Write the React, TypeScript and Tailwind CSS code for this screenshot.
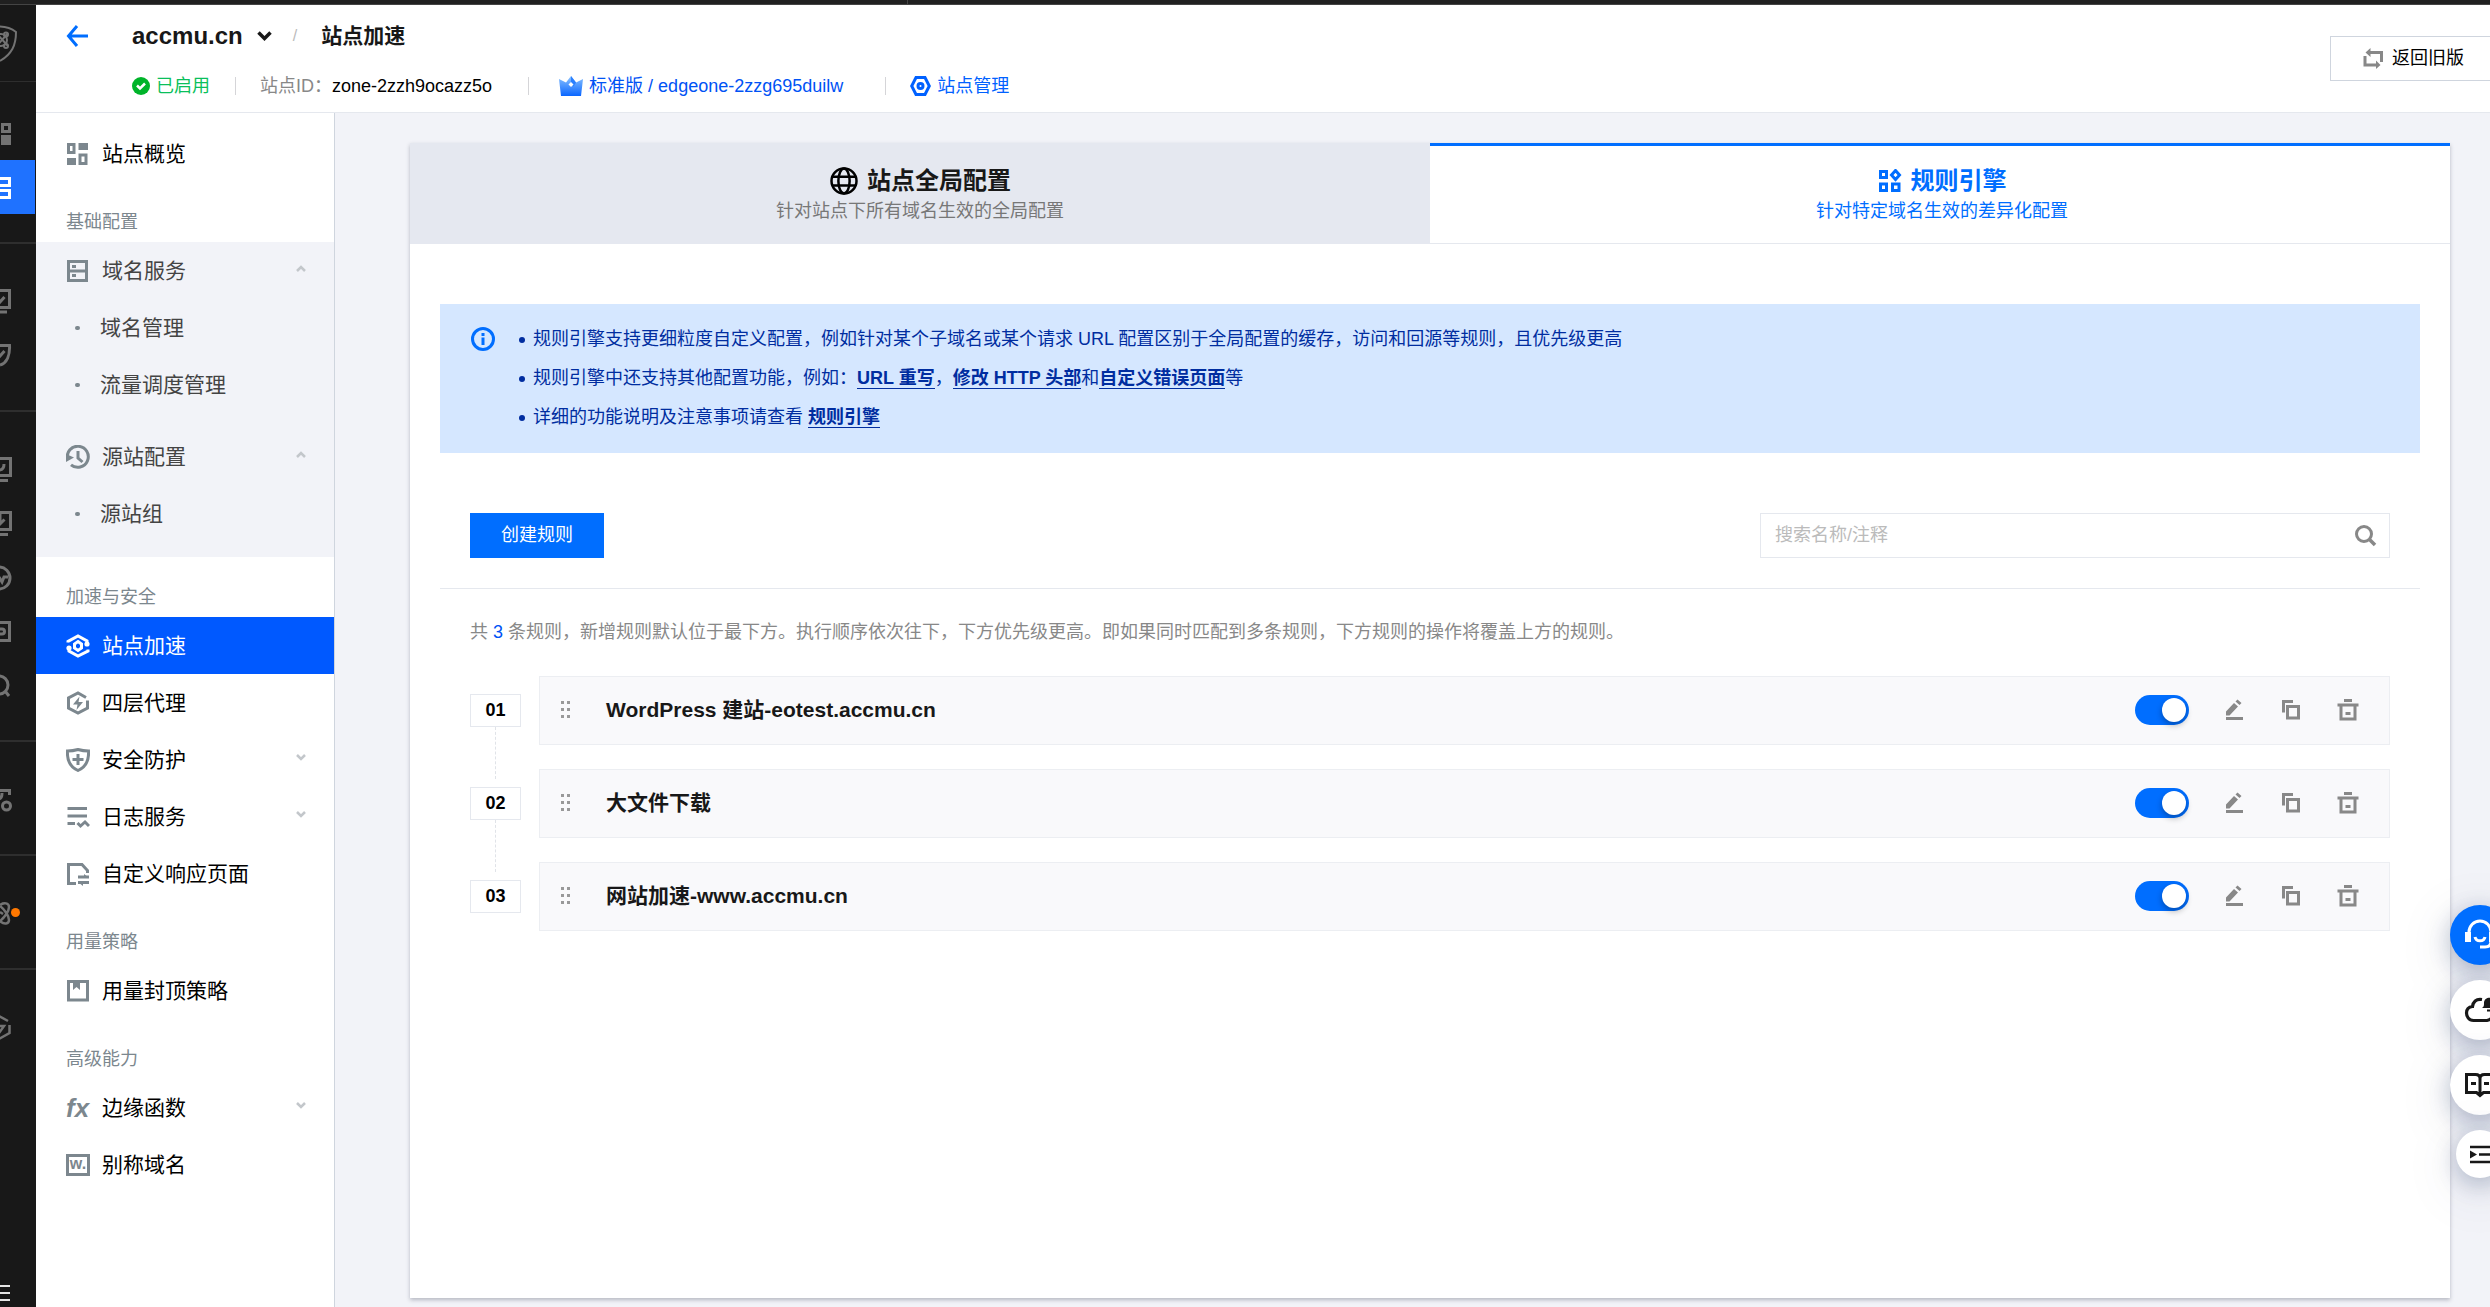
import type { ReactNode } from 'react';

type IconProps = { className?: string; children: ReactNode; size?: number; sw?: number };

function Icon({ className = '', children, size = 24, sw = 3 }: IconProps) {
  return (
    <svg
      aria-hidden="true"
      width={size}
      height={size}
      viewBox="0 0 24 24"
      fill="none"
      stroke="currentColor"
      strokeWidth={sw}
      className={'shrink-0 ' + className}
    >
      {children}
    </svg>
  );
}

const icons: Record<string, ReactNode> = {
  overview: (
    <Icon className="text-[#7c878e]">
      <path d="M2.500 2.500h5.500v8h-5.500zM14 13h6v8.500h-6z" />
      <path d="M1 16h9v7H1zM12.500 1H22v7h-9.500z" fill="currentColor" stroke="none" />
    </Icon>
  ),
  domain: (
    <Icon className="text-[#7c878e]">
      <path d="M2.500 2.500h18v19h-18zM1 12h21" />
      <path d="M6 6h4v3H6zM6 15h4v3H6z" fill="currentColor" stroke="none" />
    </Icon>
  ),
  origin: (
    <Icon className="text-[#7c878e]">
      <path d="M1.500 14A10.500 10.500 0 1 1 5 19.800" />
      <path d="M12 6v7l4.500 4" />
      <path d="M0 9v8l8-4.500z" fill="currentColor" stroke="none" />
    </Icon>
  ),
  accel: (
    <Icon className="text-white">
      <path d="M2 8.500V7.500L12 2l9 5v3M22 15.500V17L12 22l-9-5v-3" />
      <circle cx="21" cy="10" r="2.600" fill="currentColor" stroke="none" />
      <circle cx="3" cy="14" r="2.600" fill="currentColor" stroke="none" />
      <path d="M12 7.500l3.500 2.500v4L12 16.500 8.500 14v-4z" />
    </Icon>
  ),
  proxy: (
    <Icon className="text-[#7c878e]">
      <path d="M20 6.500L12 2 2.500 7v10l9.500 5 9.500-5V9.500" />
      <path d="M13.500 5.500L7 13.500h4.500L10.500 19 17 11h-4.500z" fill="currentColor" stroke="none" />
    </Icon>
  ),
  shield: (
    <Icon className="text-[#7c878e]">
      <path d="M12 1.500c3.500 1 7 1.500 10.500 1.500C23 11 21 18.500 12 22.500 3 18.500 1 11 1.500 3 5 3 8.500 2.500 12 1.500z" />
      <path d="M12 6v11M6.500 11.500h11" />
    </Icon>
  ),
  log: (
    <Icon className="text-[#7c878e]">
      <path d="M1.500 3.500H21M1.500 11H21M1.500 18.500H9" />
      <path d="M11.500 18l3 3 4.500-4 4 4" />
    </Icon>
  ),
  page: (
    <Icon className="text-[#7c878e]">
      <path d="M10 21.500H2.500v-19H16l5.500 6V11" />
      <path d="M12 15h11M12 20.500h11" />
      <path d="M18 12l5 4h-5zM17 24l-5-4h5z" fill="currentColor" stroke="none" />
    </Icon>
  ),
  cap: (
    <Icon className="text-[#7c878e]">
      <path d="M2.500 2.500h19v18.500h-19z" />
      <path d="M7 2h7v9l-3.500-3L7 11z" fill="currentColor" stroke="none" />
    </Icon>
  ),
  fx: <span aria-hidden="true" className="w-6 shrink-0 text-[26px] font-bold italic leading-6 text-[#7c878e]">fx</span>,
  alias: (
    <span aria-hidden="true" className="flex h-[22px] w-6 shrink-0 items-center justify-center border-[3px] border-[#7c878e] pb-0.5 text-[16px] font-bold leading-none text-[#7c878e]">
      w.
    </span>
  ),
};

function Chevron({ up = false }: { up?: boolean }) {
  return (
    <svg aria-hidden="true" width="10" height="7" viewBox="0 0 10 7" fill="none" stroke="#c3c7cb" strokeWidth="2.500" className="mb-1 ml-auto shrink-0">
      <path d={up ? 'M1 6l4-4 4 4' : 'M1 1l4 4 4-4'} />
    </svg>
  );
}

function NavItem({ icon, label, active, tone = 'text-black', arrow }: { icon: string; label: string; active?: boolean; tone?: string; arrow?: 'up' | 'down' }) {
  return (
    <a
      href="#"
      aria-current={active ? 'page' : undefined}
      className={'flex h-[57px] items-center gap-3 pl-[30px] pr-7 text-[21px] ' + (active ? 'bg-[#0059ff] text-white' : tone)}
    >
      {icons[icon]}
      <span>{label}</span>
      {arrow && <Chevron up={arrow === 'up'} />}
    </a>
  );
}

function SubItem({ label }: { label: string }) {
  return (
    <a href="#" className="flex h-[57px] items-center gap-5 pl-[39px] text-[21px] text-[#444]">
      <span className="h-1 w-[5px] rounded-sm bg-[#7c878e]" />
      {label}
    </a>
  );
}

function NavLabel({ children }: { children: ReactNode }) {
  return <h2 className="h-[60px] pl-[30px] pt-5 text-[18px] leading-[40px] text-[#7c878e]">{children}</h2>;
}

function Sidebar() {
  return (
    <nav className="w-[299px] shrink-0 border-r border-[#cfd5de] bg-white pt-3">
      <NavItem icon="overview" label="站点概览" />
      <NavLabel>基础配置</NavLabel>
      <div className="bg-[#f2f3f8]">
        <div className="pb-[15px]">
          <NavItem icon="domain" label="域名服务" tone="text-[#444]" arrow="up" />
          <SubItem label="域名管理" />
          <SubItem label="流量调度管理" />
        </div>
        <div className="pb-[15px]">
          <NavItem icon="origin" label="源站配置" tone="text-[#444]" arrow="up" />
          <SubItem label="源站组" />
        </div>
      </div>
      <NavLabel>加速与安全</NavLabel>
      <NavItem icon="accel" label="站点加速" active />
      <NavItem icon="proxy" label="四层代理" />
      <NavItem icon="shield" label="安全防护" arrow="down" />
      <NavItem icon="log" label="日志服务" arrow="down" />
      <NavItem icon="page" label="自定义响应页面" />
      <NavLabel>用量策略</NavLabel>
      <NavItem icon="cap" label="用量封顶策略" />
      <NavLabel>高级能力</NavLabel>
      <NavItem icon="fx" label="边缘函数" arrow="down" />
      <NavItem icon="alias" label="别称域名" />
    </nav>
  );
}

function RailItem({ label, active, dot, children }: { label: string; active?: boolean; dot?: boolean; children: ReactNode }) {
  return (
    <a href="#" aria-label={label} className={'relative flex h-[54px] w-[35px] items-center pt-0.5 ' + (active ? 'bg-[#1f72ff] text-white' : 'text-[#737373]')}>
      <svg aria-hidden="true" width="24" height="28" viewBox="0 0 24 28" fill="none" stroke="currentColor" strokeWidth="3">
        {children}
      </svg>
      {dot && <span className="absolute left-[11px] top-[23px] size-[9px] rounded-full bg-[#ff7800]" />}
    </a>
  );
}

function Rail() {
  const group = 'border-b-2 border-[#2e2e2e] py-[29px]';
  return (
    <aside className="flex w-9 shrink-0 flex-col overflow-hidden bg-[#181818]">
      <a href="#" aria-label="控制台首页" className="h-[77px] border-b border-[#2e2e2e] pt-5 text-[#737373]">
        <svg aria-hidden="true" width="24" height="38" viewBox="0 0 24 38" fill="none" stroke="currentColor" strokeWidth="2">
          <path d="M-1 1.500C5 1.500 11 3 16 7c0 13-4 22-16 29" />
          <circle cx="1" cy="15" r="6" />
          <path d="M-4 8L8 21M8 8L-4 22" />
          <circle cx="6" cy="9.500" r="2" />
          <circle cx="6" cy="21" r="2" />
        </svg>
      </a>
      <div className="border-b-2 border-[#2e2e2e] pb-[28px] pt-[24px]">
        <RailItem label="概览">
          <path d="M2.500 4.500h7v7h-7z" />
          <path d="M1 15h10v10H1z" fill="currentColor" stroke="none" />
        </RailItem>
        <RailItem label="站点列表" active>
          <path d="M-6 4.500H9.500v7H-6M-6 16.500H9.500v7H-6" />
        </RailItem>
      </div>
      <div className={group}>
        <RailItem label="检测">
          <path d="M-4 3.500H9.500v17H-4M-4 25H7M-2 12l2 3 4.500-5" />
        </RailItem>
        <RailItem label="防护">
          <path d="M-4 4.500H9.500C10 14 7 22 0 24M-3 12l3 3 4.500-5" />
        </RailItem>
      </div>
      <div className={group}>
        <RailItem label="监控">
          <path d="M-4 3.500H10.500v17H-4M-4 25.500H8M-1 15c3 0 5-2 5-6" />
        </RailItem>
        <RailItem label="下载">
          <path d="M-4 3.500H10.500v17H-4M-4 25.500H8M0 5v10M-4 10l4 5 4.500-4.500" />
        </RailItem>
        <RailItem label="状态">
          <circle cx="-1" cy="15" r="11" />
          <path d="M-1 14l3 5 2-5h4" />
        </RailItem>
        <RailItem label="工具">
          <path d="M-4 5.500H9.500v18H-4M-2 12h4a2 2 0 0 1 0 5h-4" />
        </RailItem>
        <RailItem label="搜索">
          <circle cx="-1" cy="14" r="9" />
          <path d="M5 20l4 5" />
        </RailItem>
      </div>
      <div className={group}>
        <RailItem label="设置">
          <path d="M-3 5.500H9.500V10M-2 14c3 0 4-3 4-6" />
          <circle cx="6.500" cy="21" r="4" />
        </RailItem>
      </div>
      <div className={group}>
        <RailItem label="更多产品" dot>
          <path d="M0 6c4-3 9-2 9 2s-4 10-9 14M0 13l3 2M0 22c4 4 9 3 9-1 0-4-4-10-9-14" strokeWidth="2.500" />
        </RailItem>
      </div>
      <div className="py-[29px]">
        <RailItem label="加速">
          <path d="M-1 3l9 5M9.500 12v8L-1 26M0 13h4l-5 7" strokeWidth="2.500" />
        </RailItem>
      </div>
      <button type="button" aria-label="展开菜单" className="mb-[6px] mt-auto h-4 w-[10px]">
        <svg aria-hidden="true" width="10" height="16" viewBox="0 0 10 16" stroke="#e5e5e5" strokeWidth="2">
          <path d="M0 1h10M0 8h10M0 15h10" />
        </svg>
      </button>
    </aside>
  );
}

function Sep() {
  return <span className="h-[18px] w-px shrink-0 bg-[#d5d5d8]" />;
}

function Header() {
  return (
    <header className="flex items-start border-b border-[#e5e8ee] bg-white">
      <a href="#" aria-label="返回" className="ml-[30px] mt-[20px]">
        <svg aria-hidden="true" width="24" height="22" viewBox="0 0 24 22" fill="none" stroke="#006eff" strokeWidth="3">
          <path d="M11 1L2.500 11l8.500 10M2 11h20" />
        </svg>
      </a>
      <div className="ml-[42px] h-[107px]">
        <div className="mt-[13px] flex h-9 items-center">
          <button type="button" className="flex items-center gap-[14px] text-[24px] font-bold text-[#181818]">
            accmu.cn
            <svg aria-hidden="true" width="15" height="11" viewBox="0 0 15 11" fill="none" stroke="#181818" strokeWidth="3.500">
              <path d="M1.500 1.500l6 6 6-6" />
            </svg>
          </button>
          <span className="ml-[21px] text-[16px] text-[#bbb]">/</span>
          <h1 className="ml-6 text-[21px] font-bold text-[#181818]">站点加速</h1>
        </div>
        <div className="mt-[14px] flex h-9 items-center text-[18px]">
          <span className="flex items-center gap-[6px] text-[#0abf5b]">
            <svg aria-hidden="true" width="18" height="18" viewBox="0 0 18 18">
              <circle cx="9" cy="9" r="9" fill="#00b42a" />
              <path d="M5 8.500l3 3 5-5" fill="none" stroke="#fff" strokeWidth="2.500" />
            </svg>
            已启用
          </span>
          <span className="ml-[25px] flex"><Sep /></span>
          <span className="ml-6 text-[#888]">站点ID：</span>
          <span className="text-black">zone-2zzh9ocazz5o</span>
          <span className="ml-9 flex"><Sep /></span>
          <a href="#" className="ml-[30px] flex items-center gap-[6px] text-[#0052f5]">
            <svg aria-hidden="true" width="24" height="20" viewBox="0 0 24 20">
              <defs>
                <linearGradient id="crown" x1="0" y1="0" x2="0" y2="1">
                  <stop offset="0" stopColor="#8cc3ff" />
                  <stop offset="1" stopColor="#0a66ff" />
                </linearGradient>
              </defs>
              <path d="M0 3l7 3.500L12 0l5 6.500L24 3l-2 17H2z" fill="url(#crown)" />
              <path d="M12 0l5 6.500-2.500 4L12 7z" fill="#2b80ff" />
              <path d="M12 6l2.500 2.500L12 11 9.500 8.500z" fill="#fff" />
            </svg>
            标准版 / edgeone-2zzg695duilw
          </a>
          <span className="ml-[42px] flex"><Sep /></span>
          <a href="#" className="ml-6 flex items-center gap-[6px] text-[#0061ff]">
            <svg aria-hidden="true" width="21" height="20" viewBox="0 0 21 20" fill="none" stroke="#0061ff" strokeWidth="3">
              <path d="M6 1.500h9L19.300 10 15 18.500H6L1.700 10z" />
              <circle cx="10.500" cy="10" r="2.500" />
            </svg>
            站点管理
          </a>
        </div>
      </div>
      <button type="button" className="ml-auto mt-[31px] flex h-[45px] items-center gap-[9px] border border-r-0 border-[#cfd5de] pl-8 pr-[26px] text-[18px] text-black">
        <svg aria-hidden="true" width="20" height="21" viewBox="0 0 20 21" fill="none" stroke="#888" strokeWidth="3">
          <path d="M5 4.500h13.500V14M2 8v9h13" />
          <path d="M2.500 4.500L7.500 0v9zM17.500 17L13 12.500v8.500z" fill="#888" stroke="none" />
        </svg>
        返回旧版
      </button>
    </header>
  );
}

function Tabs() {
  return (
    <div role="tablist" className="grid grid-cols-2">
      <button type="button" role="tab" aria-selected="false" className="flex h-[101px] flex-col items-center bg-[#e5e8f0] pt-[22px]">
        <span className="flex h-[31px] items-center gap-2 text-[24px] font-bold text-[#181818]">
          <Icon size={30} sw={2} className="text-black">
            <circle cx="12" cy="12" r="10" />
            <ellipse cx="12" cy="12" rx="4.500" ry="10" />
            <path d="M3 8.500h18M3 15.500h18" />
          </Icon>
          站点全局配置
        </span>
        <span className="text-[18px] leading-[30px] text-[#777]">针对站点下所有域名生效的全局配置</span>
      </button>
      <button type="button" role="tab" aria-selected="true" className="flex h-[101px] flex-col items-center border-b border-t-[3px] border-b-[#e5e8ee] border-t-[#006eff] pl-1 pt-[19px] text-[#006eff]">
        <span className="flex h-[31px] items-center gap-[9px] text-[24px] font-bold">
          <Icon>
            <path d="M2.500 2.500h6v6h-6zM2.500 15h6v6.500h-6zM14.500 15h6.500v6.500h-6.500zM17.500 1.500l4 4.500-4 4.500-4-4.500z" />
          </Icon>
          规则引擎
        </span>
        <span className="text-[18px] leading-[30px]">针对特定域名生效的差异化配置</span>
      </button>
    </div>
  );
}

function DocLink({ children }: { children: ReactNode }) {
  return <a href="#" className="border-b border-[#002da0] font-bold">{children}</a>;
}

const notes: ReactNode[] = [
  <>规则引擎支持更细粒度自定义配置，例如针对某个子域名或某个请求 URL 配置区别于全局配置的缓存，访问和回源等规则，且优先级更高</>,
  <>
    规则引擎中还支持其他配置功能，例如：<DocLink>URL 重写</DocLink>，<DocLink>修改 HTTP 头部</DocLink>和<DocLink>自定义错误页面</DocLink>等
  </>,
  <>
    详细的功能说明及注意事项请查看 <DocLink>规则引擎</DocLink>
  </>,
];

function Notice() {
  return (
    <div className="flex min-h-[149px] gap-6 bg-[#d5e7ff] pb-4 pl-[31px] pr-8 pt-4 text-[18px] leading-[39px] text-[#002da0]">
      <Icon className="mt-[7px] text-[#006eff]">
        <circle cx="12" cy="12" r="10.500" />
        <path d="M12 6v3M12 10.500V18" />
      </Icon>
      <ul>
        {notes.map((line, i) => (
          <li key={i} className="flex items-center gap-2">
            <span className="size-[6px] shrink-0 rounded-full bg-[#002da0]" />
            <span>{line}</span>
          </li>
        ))}
      </ul>
    </div>
  );
}

const rules = ['WordPress 建站-eotest.accmu.cn', '大文件下载', '网站加速-www.accmu.cn'];

function RuleRow({ name, index }: { name: string; index: number }) {
  return (
    <li className="flex h-[93px] items-start gap-[18px]">
      <div className="flex w-[51px] shrink-0 flex-col items-center pt-[18px]">
        <span className="flex h-[33px] w-full items-center justify-center border border-[#e5e8ee] text-[18px] font-bold text-black">
          {'0' + (index + 1)}
        </span>
        {index < rules.length - 1 && <span className="h-[52px] w-0 border-l border-dashed border-[#e0e3e8]" />}
      </div>
      <div className="flex h-[69px] flex-1 items-center border border-[#eceef2] bg-[#f9f9fb] pb-px pl-[21px] pr-[29px]">
        <svg aria-hidden="true" width="10" height="18" viewBox="0 0 10 18" fill="#999">
          <path d="M0 0h3v3H0zM6 0h3v3H6zM0 7h3v3H0zM6 7h3v3H6zM0 14h3v3H0zM6 14h3v3H6z" />
        </svg>
        <h3 className="ml-[35px] text-[21px] font-bold text-[#181818]">{name}</h3>
        <label className="relative ml-auto h-[30px] w-[54px] cursor-pointer">
          <input type="checkbox" role="switch" defaultChecked aria-label={'启用 ' + name} className="peer block size-full appearance-none rounded-full bg-[#aaa] checked:bg-[#006eff]" />
          <span className="absolute left-[3px] top-[3px] size-6 rounded-full bg-white shadow-[0_3px_6px_rgba(0,0,0,0.3)] peer-checked:left-[27px]" />
        </label>
        <button type="button" aria-label="编辑" className="ml-[33px] text-[#888]">
          <Icon>
            <path d="M4 20.500h17" />
            <path d="M4 17.500v-4l8-8.500 4 3.500-8.500 9zM13.500 3.500L15.500 1.500l4 3.500-2 2z" fill="currentColor" stroke="none" />
          </Icon>
        </button>
        <button type="button" aria-label="复制" className="ml-[33px] text-[#888]">
          <Icon>
            <path d="M4.500 14.500V3.500H14M8.500 8.500h11V20h-11z" />
          </Icon>
        </button>
        <button type="button" aria-label="删除" className="ml-[33px] text-[#888]">
          <Icon>
            <path d="M8 2.500h8M1.500 7h21M5 8v13h14V8M9.500 15.500h5" />
          </Icon>
        </button>
      </div>
    </li>
  );
}

function FloatButton({ label, small, primary, children }: { label: string; small?: boolean; primary?: boolean; children: ReactNode }) {
  return (
    <button
      type="button"
      aria-label={label}
      className={
        'flex items-center justify-center rounded-full shadow-[0_6px_24px_rgba(54,71,112,0.35),0_12px_60px_rgba(54,71,112,0.12)] ' +
        (small ? 'size-12 ' : 'size-[60px] ') +
        (primary ? 'bg-[#006eff] text-white' : 'bg-white text-[#181818]')
      }
    >
      {children}
    </button>
  );
}

export default function App() {
  return (
    <div className="flex min-h-screen flex-col overflow-hidden bg-[#f2f3f8] font-['Liberation_Sans','Noto_Sans_CJK_SC',sans-serif]">
      <div className="flex h-[5px] border-b border-[#444] bg-[#202020]">
        <span className="w-[908px] border-r border-[#444]" />
      </div>
      <div className="flex flex-1">
        <Rail />
        <div className="flex min-w-0 flex-1 flex-col">
          <Header />
          <div className="flex flex-1">
            <Sidebar />
            <main className="flex flex-1 flex-col pb-[9px] pl-[75px] pr-10 pt-[30px]">
              <section className="flex-1 bg-white shadow-[0_2px_4px_rgba(54,58,80,0.32)]">
                <Tabs />
                <div className="px-[30px] pt-[60px]">
                  <Notice />
                  <div className="flex items-center justify-between border-b border-[#e5e8ee] px-[30px] pb-[30px] pt-[60px]">
                    <button type="button" className="h-[45px] bg-[#006eff] px-[31px] text-[18px] text-white">创建规则</button>
                    <div className="flex h-[45px] w-[630px] items-center border border-[#e5e8ee] pl-[14px] pr-3">
                      <input type="search" aria-label="搜索名称/注释" placeholder="搜索名称/注释" className="min-w-0 flex-1 text-[18px] outline-none placeholder:text-[#bbb]" />
                      <button type="button" aria-label="搜索" className="text-[#888]">
                        <Icon>
                          <circle cx="11" cy="10" r="7.500" />
                          <path d="M16.500 15.500l5.500 5.500" strokeWidth="3.500" />
                        </Icon>
                      </button>
                    </div>
                  </div>
                  <div className="px-[30px] pt-7">
                    <p className="text-[18px] leading-[30px] text-[#888]">
                      共 <span className="text-[#0052f5]">3</span> 条规则，新增规则默认位于最下方。执行顺序依次往下，下方优先级更高。即如果同时匹配到多条规则，下方规则的操作将覆盖上方的规则。
                    </p>
                    <ul className="flex flex-col pt-[29px]">
                      {rules.map((name, i) => (
                        <RuleRow key={name} name={name} index={i} />
                      ))}
                    </ul>
                  </div>
                </div>
              </section>
            </main>
          </div>
        </div>
      </div>
      <div className="fixed -right-5 bottom-[129px] flex flex-col items-center gap-[15px]">
        <FloatButton label="在线客服" primary>
          <svg aria-hidden="true" width="32" height="32" viewBox="0 0 32 32" fill="none" stroke="currentColor" strokeWidth="3">
            <path d="M5 14v-1a11 11 0 0 1 22 0v9q0 6-6 6h-5M11 18c1 5 9 5 10 0" />
            <path d="M1 13h6v10H1zM25 13h6v10h-6z" fill="currentColor" stroke="none" />
          </svg>
        </FloatButton>
        <FloatButton label="云消息">
          <svg aria-hidden="true" width="32" height="32" viewBox="0 0 32 32" fill="none" stroke="currentColor" strokeWidth="3.200">
            <path d="M18 5.500c-6-1-9 2.500-9.500 7C4 13 2.500 16 2.500 19s2 7.500 7 7.500H23q6-1 6-7" />
            <path d="M18 14c2-1 2-3 2-5 0-7 11-7 11 0 0 2 0 4 2 5zM23 15.500h5v2h-5z" fill="currentColor" stroke="none" />
          </svg>
        </FloatButton>
        <FloatButton label="文档">
          <svg aria-hidden="true" width="32" height="28" viewBox="0 0 32 28" fill="none" stroke="currentColor" strokeWidth="3">
            <path d="M2.500 3.500h9q4.500 0 4.500 4 0-4 4.500-4h9v18h-10l-3.500 3-3.500-3h-10zM16 7v17M7 12.500h5M20 12.500h5" />
          </svg>
        </FloatButton>
        <FloatButton label="收起" small>
          <svg aria-hidden="true" width="20" height="19" viewBox="0 0 20 19" fill="none" stroke="currentColor" strokeWidth="2.500">
            <path d="M0 2h20M9 9.500h11M0 17h20" />
            <path d="M0 5.500l7 4-7 4z" fill="currentColor" stroke="none" />
          </svg>
        </FloatButton>
      </div>
    </div>
  );
}
